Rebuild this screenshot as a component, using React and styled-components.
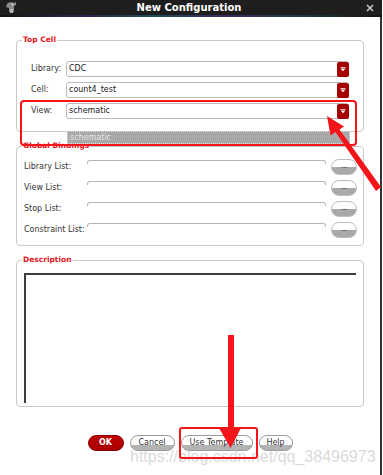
import React from "react";
import styled, { createGlobalStyle } from "styled-components";

const Global = createGlobalStyle`
  html, body { margin: 0; padding: 0; background: #fff; }
  body { font-family: "DejaVu Sans", Verdana, sans-serif; }
  #root { width: 383px; height: 475px; overflow: hidden; }
`;

const Window = styled.div`
  position: relative;
  width: 382px;
  height: 475px;
  display: flex;
  flex-direction: column;
  background: #fff;
  overflow: hidden;
`;

const TitleBar = styled.div`
  display: grid;
  grid-template-columns: 1fr auto 1fr;
  align-items: center;
  height: 15px;
  background: #1e1e1e;
  padding: 0 8px 0 4px;
`;

const Title = styled.div`
  color: #fff;
  font-weight: bold;
  font-size: 10px;
  line-height: 15px;
  white-space: nowrap;
`;

const CloseBox = styled.div`
  justify-self: end;
  display: flex;
  align-items: center;
`;

const Accent = styled.div`
  height: 2px;
  background: linear-gradient(90deg, #141414 0%, #2a2550 22%, #1d4d5a 40%, #3b2a62 58%, #1d3b48 78%, #141414 100%);
`;

const Body = styled.div`
  flex: 1;
  border-right: 2px solid #333;
  padding: 0 16px;
  display: flex;
  flex-direction: column;
`;

const Group = styled.fieldset`
  margin: ${(p) => p.$top}px 0 0;
  padding: 0;
  border: 1px solid #c9c9c9;
  border-radius: 4px;
  min-width: 0;
`;

const Legend = styled.legend`
  margin-left: 5px;
  padding: 0 1px;
  font-size: 7.5px;
  line-height: 10px;
  font-weight: bold;
  color: #e3131b;
`;

const Rows = styled.div`
  display: flex;
  flex-direction: column;
  gap: 5px;
  padding: ${(p) => p.$pad};
`;

const Row = styled.div`
  display: flex;
  align-items: center;
  height: 16px;
`;

const Label = styled.span`
  width: ${(p) => p.$w}px;
  flex: none;
  font-size: 8px;
  line-height: 10px;
  color: #333;
  white-space: nowrap;
`;

const Field = styled.div`
  position: relative;
  flex: 1;
  height: 16px;
  box-sizing: border-box;
  border: 1px solid #b9b9b9;
  border-radius: 3px;
  display: flex;
  align-items: center;
  background: #fff;
`;

const FieldText = styled.span`
  flex: 1;
  padding-left: 2px;
  font-size: 8px;
  line-height: 10px;
  color: #222;
`;

const DropButton = styled.div`
  width: 12px;
  height: 15px;
  margin-right: -1px;
  border-radius: 2px;
  background: #a50000;
  display: flex;
  align-items: center;
  justify-content: center;
`;

const Popup = styled.div`
  position: absolute;
  left: 0;
  top: 27px;
  width: 283px;
  height: 13px;
  box-sizing: border-box;
  background: #a9a9a9;
  border: 1px dotted #e2e2e2;
  display: flex;
  align-items: center;
  padding-left: 2px;
  font-size: 8px;
  color: #e4e4e4;
`;

const ListInput = styled.div`
  flex: 1;
  height: 16px;
  padding-top: 1px;
  box-sizing: border-box;
`;

const Rim = styled.div`
  height: 3px;
  border: 1px solid #b5b5b5;
  border-bottom: none;
  border-radius: 3px 3px 0 0;
`;

const DotsButton = styled.div`
  width: 26px;
  height: 16px;
  margin-left: 5px;
  box-sizing: border-box;
  border: 1px solid #bdbdbd;
  border-radius: 8px;
  background: linear-gradient(#ffffff 0 52%, #a9a9a9 52% 100%);
  text-align: center;
  font-size: 8px;
  line-height: 11px;
  letter-spacing: -0.5px;
  color: #3c3c3c;
`;

const TextArea = styled.div`
  height: 128px;
  border-top: 2px solid #3e3e3e;
  border-left: 2px solid #3e3e3e;
  background: #fff;
`;

const ButtonBar = styled.div`
  margin-top: 28px;
  display: flex;
  justify-content: center;
  gap: 6px;
`;

const Button = styled.div`
  width: ${(p) => p.$w}px;
  height: 16px;
  box-sizing: border-box;
  border-radius: 8px;
  border: 1px solid ${(p) => (p.$primary ? "#8a0000" : "#9c9c9c")};
  background: ${(p) =>
    p.$primary
      ? "linear-gradient(#c00000, #a80000)"
      : "linear-gradient(#ffffff 0 66%, #b3b3b3 66% 100%)"};
  color: ${(p) => (p.$primary ? "#fff" : "#333")};
  font-weight: ${(p) => (p.$primary ? "bold" : "normal")};
  font-size: 8px;
  line-height: 14px;
  text-align: center;
  white-space: nowrap;
`;

const Overlay = styled.svg`
  position: absolute;
  left: 0;
  top: 0;
  pointer-events: none;
`;

const Watermark = styled.div`
  position: absolute;
  left: 130px;
  top: 447px;
  font-family: "Liberation Sans", Arial, sans-serif;
  font-size: 16px;
  line-height: 20px;
  color: rgba(205, 205, 205, 0.75);
  white-space: nowrap;
  pointer-events: none;
`;

const Triangle = () => (
  <svg width="8" height="6" viewBox="0 0 8 6">
    <path d="M1.5 1.2h5v0.8h-5z M1.5 2.6h5L4 5.2z" fill="#fff" />
  </svg>
);

const AppIcon = () => (
  <svg width="14" height="13" viewBox="0 0 14 13">
    <path d="M3 3c1-2 5-2.5 7-1l2 -1v3l-2 1v6H5V7L2 6z" fill="#8a8a8a" />
    <circle cx="8.5" cy="3.5" r="1" fill="#ddd" />
    <path d="M6 8h3v4H6z" fill="#b5b5b5" />
  </svg>
);

const CloseIcon = () => (
  <svg width="8" height="8" viewBox="0 0 8 8">
    <path d="M1 1L7 7M7 1L1 7" stroke="#c8c8c8" strokeWidth="1.6" />
  </svg>
);

const topRows = [
  { label: "Library:", value: "CDC" },
  { label: "Cell:", value: "count4_test" },
  { label: "View:", value: "schematic", popup: true },
];

const bindings = ["Library List:", "View List:", "Stop List:", "Constraint List:"];

export default function App() {
  return (
    <>
      <Global />
      <Window>
        <TitleBar>
          <AppIcon />
          <Title>New Configuration</Title>
          <CloseBox>
            <CloseIcon />
          </CloseBox>
        </TitleBar>
        <Accent />
        <Body>
          <Group $top={18}>
            <Legend>Top Cell</Legend>
            <Rows $pad="16px 14px 12px 14px">
              {topRows.map((r) => (
                <Row key={r.label}>
                  <Label $w={35}>{r.label}</Label>
                  <Field>
                    <FieldText>{r.value}</FieldText>
                    <DropButton>
                      <Triangle />
                    </DropButton>
                    {r.popup && <Popup>schematic</Popup>}
                  </Field>
                </Row>
              ))}
            </Rows>
          </Group>

          <Group $top={9}>
            <Legend>Global Bindings</Legend>
            <Rows $pad="8px 6px 7px 7px">
              {bindings.map((b) => (
                <Row key={b}>
                  <Label $w={63}>{b}</Label>
                  <ListInput>
                    <Rim />
                  </ListInput>
                  <DotsButton>...</DotsButton>
                </Row>
              ))}
            </Rows>
          </Group>

          <Group $top={9}>
            <Legend>Description</Legend>
            <Rows $pad="8px 7px 3px 7px">
              <TextArea />
            </Rows>
          </Group>

          <ButtonBar>
            <Button $w={36} $primary>OK</Button>
            <Button $w={45}>Cancel</Button>
            <Button $w={72}>Use Template</Button>
            <Button $w={34}>Help</Button>
          </ButtonBar>
        </Body>

        <Watermark>https://blog.csdn.net/qq_38496973</Watermark>

        <Overlay width="382" height="475" viewBox="0 0 382 475">
          <rect x="21" y="101" width="335" height="44" rx="3" fill="none" stroke="#f5141a" strokeWidth="2" />
          <rect x="180" y="428" width="77" height="30" rx="2" fill="none" stroke="#f5141a" strokeWidth="2" />
          <polygon
            points="327,116 344,126.5 339.5,129.5 381,187 376,191 335.5,132 330.5,135.5"
            fill="#f5141a"
          />
          <polygon
            points="228,335 234,335 234,428 241,428 230.5,448 219,428 228,428"
            fill="#f5141a"
          />
        </Overlay>
      </Window>
    </>
  );
}
